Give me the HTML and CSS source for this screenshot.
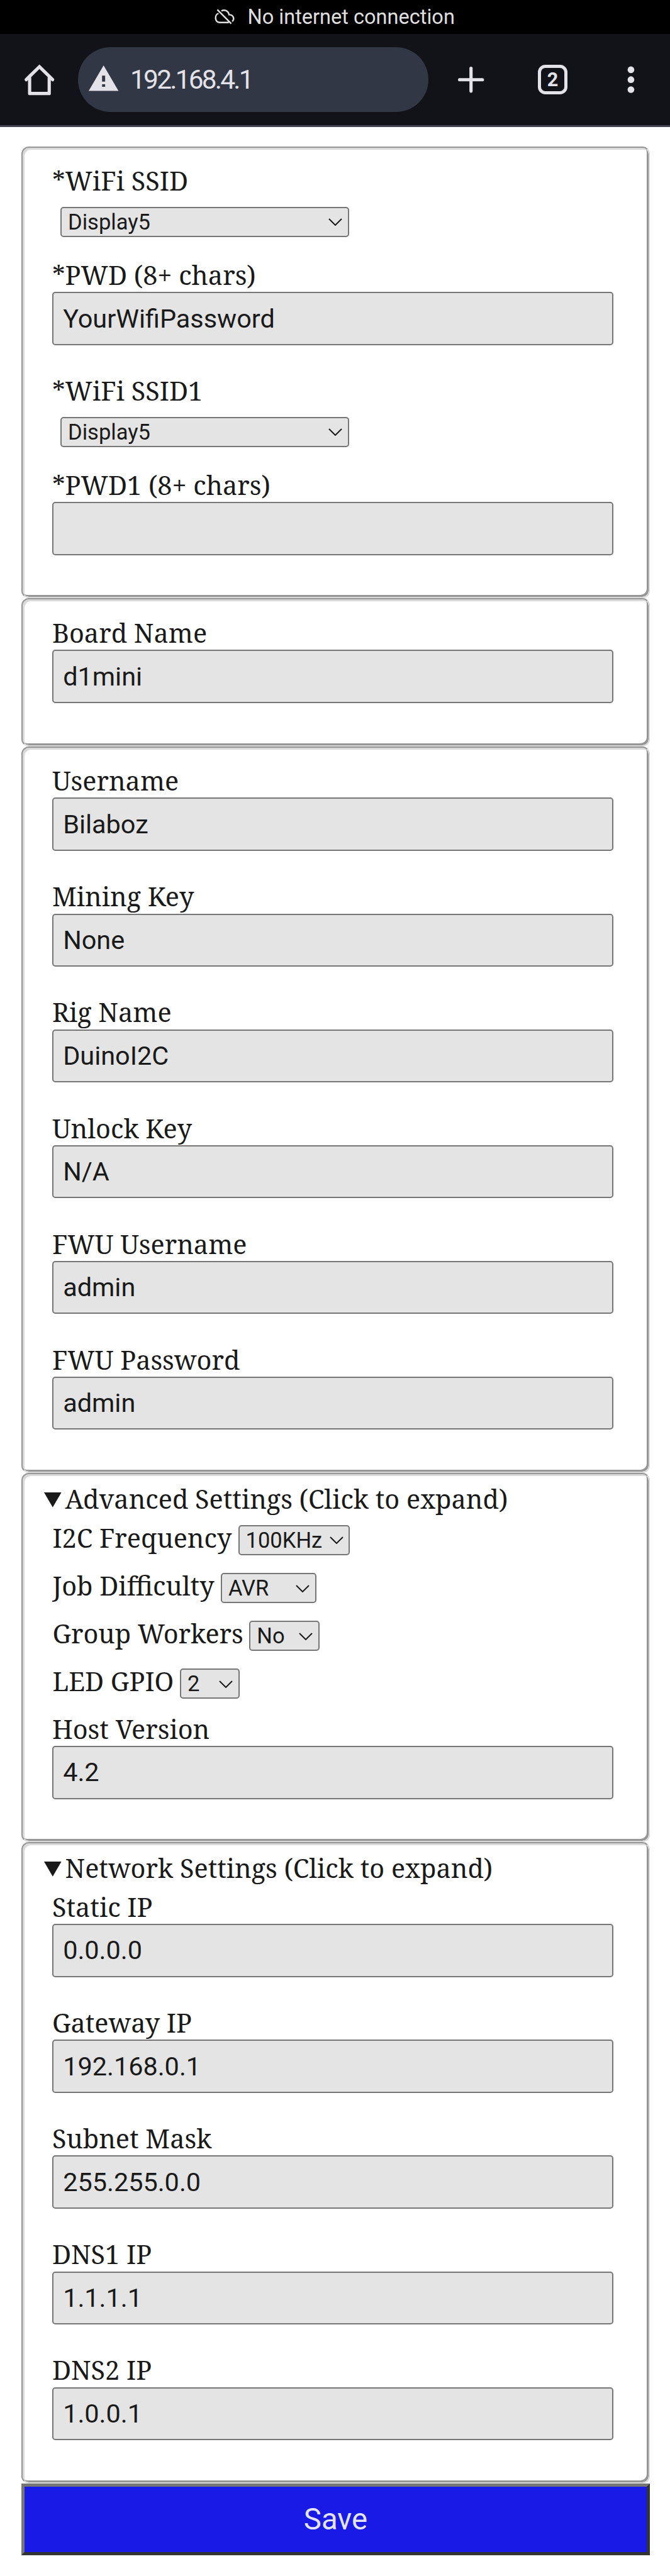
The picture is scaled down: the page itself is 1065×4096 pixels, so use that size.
FILE: index.html
```html
<!DOCTYPE html>
<html lang="en">
<head>
<meta charset="utf-8">
<title>192.168.4.1</title>
<link rel="stylesheet" href="styles.css">
</head>
<body>
<header>
  <div class="status">
    <svg class="cloud" viewBox="0 0 32 26" fill="none" stroke="#dfdfdf" stroke-width="2.5"><path d="M4.5 1.500 27 24M6.500 7.500C-.5 9 .3 22 8 22h15M11 3.500c5-3 11-.5 12.500 6C30 9.500 33 16 28.500 20.500"/></svg>
    <span class="status-text">No internet connection</span>
  </div>
  <div class="toolbar">
    <svg class="home" viewBox="0 0 48 48" fill="none" stroke="#e3e2e8" stroke-width="5.200" stroke-linecap="round" stroke-linejoin="round"><path stroke-linejoin="miter" d="M2.700 24 24 3.200 45.300 24"/><path d="M8.200 21v25.300h31.600V21"/></svg>
    <div class="address">
      <svg class="warn" viewBox="0 0 48 41"><path fill="#e3e2e8" fill-rule="evenodd" d="M24 0 48 41H0zM21.500 16.500v9.500h5v-9.500zM21.500 30.500v4h5v-4z"/></svg>
      <span class="url">192.168.4.1</span>
    </div>
    <svg class="plus" viewBox="0 0 42 42" stroke="#e3e2e8" stroke-width="5.200" stroke-linecap="round"><path d="M21 2.600v36.800M2.600 21h36.800"/></svg>
    <span class="tabs">2</span>
    <svg class="dots" viewBox="0 0 12 44" fill="#e3e2e8"><circle cx="6" cy="6" r="5.400"/><circle cx="6" cy="22" r="5.400"/><circle cx="6" cy="38" r="5.400"/></svg>
  </div>
</header>
<form>
  <fieldset>
    <div class="pick"><label>*WiFi SSID</label><select class="wide"><option>Display5</option></select></div>
    <div class="field"><label>*PWD (8+ chars)</label><input value="YourWifiPassword"></div>
    <div class="pick"><label>*WiFi SSID1</label><select class="wide"><option>Display5</option></select></div>
    <div class="field"><label>*PWD1 (8+ chars)</label><input value=""></div>
  </fieldset>
  <fieldset>
    <div class="field"><label>Board Name</label><input value="d1mini"></div>
  </fieldset>
  <fieldset>
    <div class="field"><label>Username</label><input value="Bilaboz"></div>
    <div class="field"><label>Mining Key</label><input value="None"></div>
    <div class="field"><label>Rig Name</label><input value="DuinoI2C"></div>
    <div class="field"><label>Unlock Key</label><input value="N/A"></div>
    <div class="field"><label>FWU Username</label><input value="admin"></div>
    <div class="field"><label>FWU Password</label><input value="admin"></div>
  </fieldset>
  <fieldset class="group">
    <div class="summary"><svg class="marker" viewBox="0 0 28 24"><path d="M0 0h28L14 24z" fill="#1a1a1a"/></svg><span>Advanced Settings (Click to expand)</span></div>
    <div class="row"><label class="l-freq">I2C Frequency</label><select class="s-freq"><option>100KHz</option></select></div>
    <div class="row"><label class="l-job">Job Difficulty</label><select class="s-job"><option>AVR</option></select></div>
    <div class="row"><label class="l-work">Group Workers</label><select class="s-work"><option>No</option></select></div>
    <div class="row"><label class="l-led">LED GPIO</label><select class="s-led"><option>2</option></select></div>
    <div class="field"><label>Host Version</label><input value="4.2"></div>
  </fieldset>
  <fieldset class="group">
    <div class="summary"><svg class="marker" viewBox="0 0 28 24"><path d="M0 0h28L14 24z" fill="#1a1a1a"/></svg><span>Network Settings (Click to expand)</span></div>
    <div class="field"><label>Static IP</label><input value="0.0.0.0"></div>
    <div class="field"><label>Gateway IP</label><input value="192.168.0.1"></div>
    <div class="field"><label>Subnet Mask</label><input value="255.255.0.0"></div>
    <div class="field"><label>DNS1 IP</label><input value="1.1.1.1"></div>
    <div class="field"><label>DNS2 IP</label><input value="1.0.0.1"></div>
  </fieldset>
  <button type="button">Save</button>
</form>
</body>
</html>
```
FILE: styles.css
```css
html { font-size: 9.8611px; background: #fff; overflow: hidden; }
* { box-sizing: border-box; }
body { margin: 0; font-family: "Noto Serif", "DejaVu Serif", serif; color: #1a1a1a; }
svg { display: block; flex: none; overflow: visible; }

.status { height: 5.5rem; background: #000; display: flex; align-items: center; padding-left: 34.6rem; color: #dfdfdf; font: 3.3rem/5.5rem Roboto, sans-serif; white-space: nowrap; }
.cloud { width: 3.2rem; height: 2.6rem; margin-right: 2.1rem; }
.toolbar { height: 15rem; background: #121318; border-bottom: 3px solid #42454f; display: flex; align-items: center; padding-left: 3.95rem; color: #e3e2e8; }
.home { width: 4.8rem; height: 4.8rem; }
.address { width: 56.5rem; height: 10.5rem; margin-left: 3.85rem; border-radius: 5.2rem; background: #323745; display: flex; align-items: center; padding-left: 1.7rem; }
.warn { width: 4.8rem; height: 4.1rem; margin-top: -.5rem; }
.url { margin-left: 1.9rem; font: 4.3rem/6rem Roboto, sans-serif; letter-spacing: -.28rem; }
.plus { width: 4.2rem; height: 4.2rem; margin-left: 4.75rem; }
.tabs { width: 4.7rem; height: 4.8rem; margin-left: 8.7rem; border: 5px solid #e3e2e8; border-radius: 1.2rem; font: bold 3.1rem/3.8rem Roboto, sans-serif; text-align: center; }
.dots { width: 1.2rem; height: 4.4rem; margin-left: 9.65rem; }

form { padding: 3.1rem 3.2rem 0 3.4rem; }
fieldset {
  width: 101.4rem; margin: 0;
  padding: calc(1.8rem + 3px) 0 calc(2.36rem + 3px) calc(4.55rem + 3px);
  border: 2px solid; border-color: #969696 #d9d9d9 #d9d9d9 #969696; border-radius: 1.2rem;
  box-shadow: inset 3px 3px 0 #d9d9d9, inset -3px -3px 0 #969696;
}
label, .summary { display: block; height: 6rem; font-size: 4.2rem; line-height: 6.62rem; white-space: nowrap; }
.field { height: 18.67rem; }
.field label, .pick label { margin-left: -.05rem; }
input { display: block; width: 90.4rem; height: 8.57rem; padding: 0 1.5rem; border: 2px solid #767676; border-radius: .5rem; background: #e4e4e4; color: #1a1a1a; font: 4.2rem Roboto, sans-serif; }
.pick { height: 15.19rem; }
select { appearance: none; display: block; height: 4.87rem; padding: 0 1rem; border: 2px solid #767676; border-radius: .5rem; color: #1a1a1a; font: 3.5rem Roboto, sans-serif; background: #e4e4e4 url("data:image/svg+xml,%3Csvg xmlns='http://www.w3.org/2000/svg' viewBox='0 0 22 12'%3E%3Cpath d='M1 1l10 10L21 1' fill='none' stroke='%231a1a1a' stroke-width='2'/%3E%3C/svg%3E") right .9rem center / 2.2rem 1.2rem no-repeat; }
.pick select { margin: 1.45rem 0 0 1.3rem; }
.wide { width: 46.5rem; }

.group { padding-top: calc(.42rem + 3px); }
.summary { display: flex; height: 6.25rem; margin-left: -1.4rem; }
.marker { width: 2.8rem; height: 2.4rem; margin: 2.2rem .65rem 0 0; }
.row { display: flex; height: 7.71rem; }
.row select { margin-top: 1.27rem; }
.l-freq { width: 29.95rem; }
.s-freq { width: 18rem; }
.l-job { width: 27.15rem; }
.s-job { width: 15.4rem; }
.l-work { width: 31.75rem; }
.s-work { width: 11.3rem; }
.l-led { width: 20.55rem; }
.s-led { width: 9.6rem; }

button { display: block; width: 101.4rem; height: 11.6rem; padding: 0; border: 5px solid; border-color: #767676 #333 #333 #767676; background: #1a1ae6; color: #e4e4f8; font: 4.8rem Roboto, sans-serif; }
```
